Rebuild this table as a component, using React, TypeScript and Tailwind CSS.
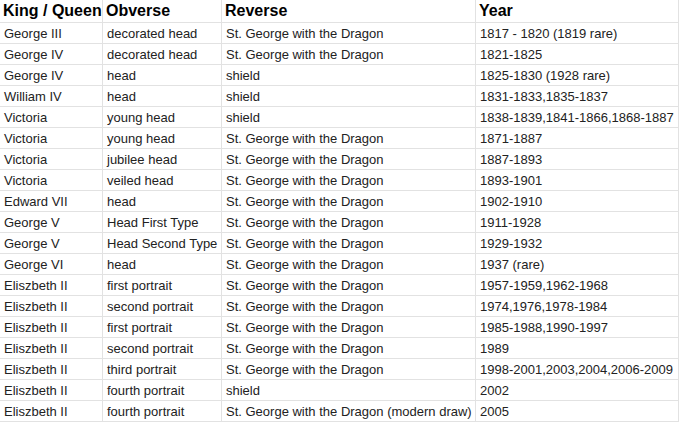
const rows: [string, string, string, string][] = [
  ['George III', 'decorated head', 'St. George with the Dragon', '1817 - 1820 (1819 rare)'],
  ['George IV', 'decorated head', 'St. George with the Dragon', '1821-1825'],
  ['George IV', 'head', 'shield', '1825-1830 (1928 rare)'],
  ['William IV', 'head', 'shield', '1831-1833,1835-1837'],
  ['Victoria', 'young head', 'shield', '1838-1839,1841-1866,1868-1887'],
  ['Victoria', 'young head', 'St. George with the Dragon', '1871-1887'],
  ['Victoria', 'jubilee head', 'St. George with the Dragon', '1887-1893'],
  ['Victoria', 'veiled head', 'St. George with the Dragon', '1893-1901'],
  ['Edward VII', 'head', 'St. George with the Dragon', '1902-1910'],
  ['George V', 'Head First Type', 'St. George with the Dragon', '1911-1928'],
  ['George V', 'Head Second Type', 'St. George with the Dragon', '1929-1932'],
  ['George VI', 'head', 'St. George with the Dragon', '1937 (rare)'],
  ['Eliszbeth II', 'first portrait', 'St. George with the Dragon', '1957-1959,1962-1968'],
  ['Eliszbeth II', 'second portrait', 'St. George with the Dragon', '1974,1976,1978-1984'],
  ['Eliszbeth II', 'first portrait', 'St. George with the Dragon', '1985-1988,1990-1997'],
  ['Eliszbeth II', 'second portrait', 'St. George with the Dragon', '1989'],
  ['Eliszbeth II', 'third portrait', 'St. George with the Dragon', '1998-2001,2003,2004,2006-2009'],
  ['Eliszbeth II', 'fourth portrait', 'shield', '2002'],
  ['Eliszbeth II', 'fourth portrait', 'St. George with the Dragon (modern draw)', '2005'],
];

const headers = ['King / Queen', 'Obverse', 'Reverse', 'Year'];

export default function App() {
  return (
    <div className="h-[425px] w-[683px] overflow-hidden bg-white font-['Liberation_Sans',Arial,sans-serif]">
      <div className="grid w-[679px] grid-cols-[103px_119px_254px_203px]">
        {/* header row */}
        {headers.map((h) => (
          <div
            key={h}
            className="flex h-[23px] items-center overflow-hidden whitespace-nowrap border-b border-r border-[#e2e2e2] pl-[3px] text-[16px] font-bold text-black"
          >
            {h}
          </div>
        ))}

        {/* data rows */}
        {rows.map((r, i) =>
          r.map((cell, j) => (
            <div
              key={i + '-' + j}
              className="flex h-[21px] items-center overflow-hidden whitespace-nowrap border-b border-r border-[#e2e2e2] pl-[4px] pt-[1px] text-[13px] text-[#222]"
            >
              {cell}
            </div>
          ))
        )}
      </div>
    </div>
  );
}
